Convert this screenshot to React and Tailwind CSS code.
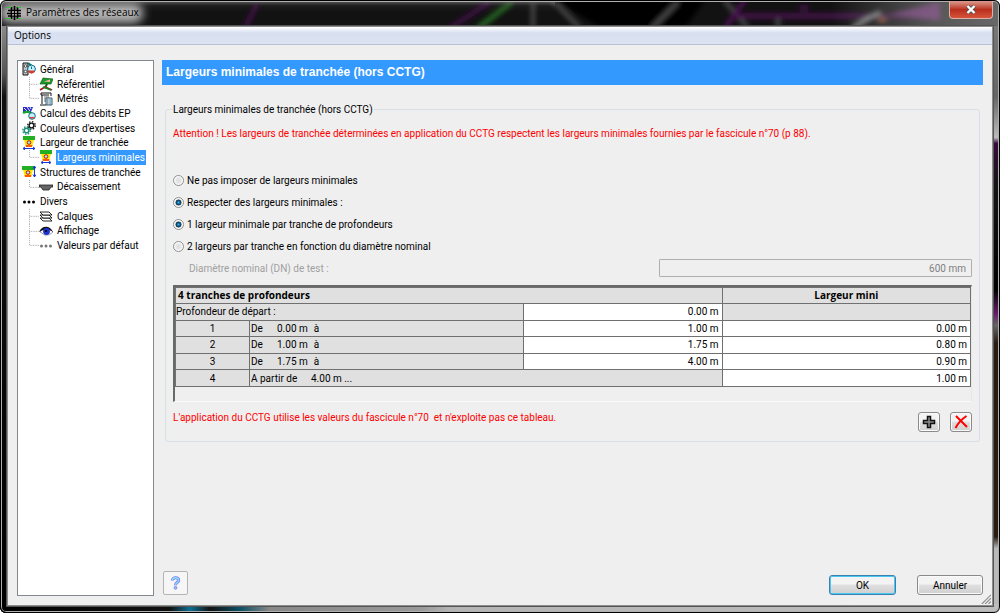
import React, { useState } from "react";

const treeItems = [
  { id: "general", label: "Général", level: 0 },
  { id: "referentiel", label: "Référentiel", level: 1 },
  { id: "metres", label: "Métrés", level: 1, last: true },
  { id: "debits", label: "Calcul des débits EP", level: 0 },
  { id: "couleurs", label: "Couleurs d'expertises", level: 0 },
  { id: "largeur", label: "Largeur de tranchée", level: 0 },
  { id: "minimales", label: "Largeurs minimales", level: 1, last: true },
  { id: "structures", label: "Structures de tranchée", level: 0 },
  { id: "decaissement", label: "Décaissement", level: 1, last: true },
  { id: "divers", label: "Divers", level: 0 },
  { id: "calques", label: "Calques", level: 1 },
  { id: "affichage", label: "Affichage", level: 1 },
  { id: "defaut", label: "Valeurs par défaut", level: 1, last: true },
];

const tranches = [
  { from: "0.00 m", to: "1.00 m", width: "0.00 m" },
  { from: "1.00 m", to: "1.75 m", width: "0.80 m" },
  { from: "1.75 m", to: "4.00 m", width: "0.90 m" },
];

function TrenchShape() {
  return (
    <>
      <path d="M1 0h12v4H1z" fill="#22b022" />
      <path d="M2 4h10l-2 7H4z" fill="#ffe600" />
      <path d="M3.500 9h7l-.5 2H4z" fill="#ff5a00" />
      <circle cx="7" cy="6.500" r="1.800" fill="#9be8ff" stroke="#c01010" strokeWidth="1" />
    </>
  );
}

function TreeIcon({ id }) {
  const shapes = {
    general: (
      <>
        <path d="M1 1h5v12H1z" fill="#c8c8c8" stroke="#111" />
        <circle cx="3.500" cy="4" r="1.300" fill="#fff" stroke="#333" strokeWidth=".8" />
        <circle cx="3.500" cy="9.500" r="1.300" fill="#fff" stroke="#333" strokeWidth=".8" />
        <path d="M6 1l4 3" stroke="#087a6a" strokeWidth="2" />
        <circle cx="9.500" cy="7" r="3.900" fill="#bff4ff" stroke="#16698a" />
        <path d="M6.500 8.500a3 3 0 0 0 6 0z" fill="#e23a2a" />
        <path d="M9.500 7V4.500" stroke="#16698a" />
      </>
    ),
    referentiel: (
      <>
        <path d="M4 1l10 1-2 5H1z" fill="#1b9a2c" stroke="#0b5c18" strokeWidth=".7" />
        <path d="M5 4.500l6-2v2.500z" fill="#ffb4a4" />
        <path d="M8 7l-2 4" stroke="#0b5c18" strokeWidth="2" />
        <path d="M1 13l5-3 7 3" stroke="#b01818" strokeWidth="1.600" fill="none" />
        <path d="M4 10l8 3" stroke="#0c8a2a" strokeWidth="1.500" />
      </>
    ),
    metres: (
      <>
        <path d="M2 1h10v3M3 3v9M2 1v2h8M1 13h6" fill="none" stroke="#111" />
        <path d="M5 5h5M5 7h3M5 9h2" stroke="#444" strokeWidth=".8" />
        <path d="M7 6h6v7H7z" fill="#dceaf0" stroke="#35566b" />
        <path d="M8 8h4M8 10h4M8 12h4" stroke="#27637f" strokeDasharray="1 .6" />
      </>
    ),
    debits: (
      <>
        <path d="M1 1h10l-2 5H1z" fill="#2b2bcc" />
        <path d="M2 2l3 3M5 1l3 4M8 1l1 2" stroke="#fff" strokeWidth=".9" />
        <path d="M1 7c4-2 8-1 11 3" stroke="#15a32c" strokeWidth="2.200" fill="none" />
        <circle cx="10" cy="10" r="3.300" fill="#bff4ff" stroke="#16698a" />
        <path d="M7.300 11a3 3 0 0 0 5.400 0z" fill="#e23a2a" />
      </>
    ),
    couleurs: (
      <>
        <circle cx="9.500" cy="4.500" r="2.400" fill="none" stroke="#111" strokeWidth="1.400" />
        <circle cx="9.500" cy="4.500" r="3.800" fill="none" stroke="#111" strokeWidth="1.300" strokeDasharray="1.500 1.485" />
        <circle cx="4.500" cy="9.500" r="2.300" fill="none" stroke="#1a8f7a" strokeWidth="1.500" />
        <circle cx="4.500" cy="9.500" r="3.700" fill="none" stroke="#1a8f7a" strokeWidth="1.400" strokeDasharray="1.500 1.400" />
      </>
    ),
    largeur: (
      <>
        <TrenchShape />
        <path d="M1 12.500h12M3 11l-2 1.500L3 14M11 11l2 1.500-2 1.500" stroke="#1636d8" fill="none" />
      </>
    ),
    minimales: (
      <>
        <TrenchShape />
        <path d="M3 12.500h8M4 11l-2 1.500L4 14M10 11l2 1.500-2 1.500" stroke="#1636d8" fill="none" />
      </>
    ),
    structures: (
      <>
        <g transform="translate(-1 1)">
          <TrenchShape />
        </g>
        <path d="M12.500 1v11M11 3.500L12.500 1 14 3.500M11 9.500l1.500 2.500L14 9.500" stroke="#1636d8" fill="none" />
      </>
    ),
    decaissement: (
      <path d="M0 5h14v2h-2l-2 3H4L2 7H0z" fill="#666" stroke="#222" strokeWidth=".8" />
    ),
    divers: (
      <g fill="#000">
        <circle cx="2.500" cy="7" r="1.500" />
        <circle cx="7" cy="7" r="1.500" />
        <circle cx="11.500" cy="7" r="1.500" />
      </g>
    ),
    calques: (
      <g fill="#fff" stroke="#111" strokeWidth=".9">
        <path d="M1 9h9l3 3H4z" />
        <path d="M1 6h9l3 3H4z" />
        <path d="M1 3h9l3 3H4z" />
      </g>
    ),
    affichage: (
      <>
        <path d="M1 8c3-5 9-5 13 0-4 4-9 4-11 1z" fill="#fff" stroke="#777" strokeWidth=".7" />
        <path d="M0 8C3 1 11 1 14 8c-4-3-9-3-14 0z" fill="#111" />
        <circle cx="7.500" cy="7.500" r="3.400" fill="#1c2fd0" />
        <circle cx="7" cy="7" r="1.100" fill="#000" />
      </>
    ),
    defaut: (
      <g fill="#777">
        <circle cx="2.500" cy="7" r="1.500" />
        <circle cx="7" cy="7" r="1.500" />
        <circle cx="11.500" cy="7" r="1.500" />
      </g>
    ),
  };
  return (
    <svg viewBox="0 0 14 14" className="h-[14px] w-[14px] shrink-0" aria-hidden="true">
      {shapes[id]}
    </svg>
  );
}

// dotted connector to the left of a child node
function Branch({ last }) {
  return (
    <svg viewBox="0 0 12 15" preserveAspectRatio="none" className="ml-[7px] h-full w-[10px] shrink-0" aria-hidden="true">
      <path
        d={last ? "M.5 0v7.500h11.500" : "M.5 0v15M.5 7.500h11.500"}
        fill="none"
        stroke="#9a9a9a"
        strokeDasharray="1 1"
      />
    </svg>
  );
}

function GlassBackground() {
  return (
    <svg
      viewBox="0 0 1000 613"
      preserveAspectRatio="none"
      className="absolute inset-0 h-full w-full"
      aria-hidden="true"
    >
      <defs>
        <filter id="soft" x="-20%" y="-50%" width="140%" height="200%">
          <feGaussianBlur stdDeviation="2.5" />
        </filter>
        <filter id="glow" x="-20%" y="-100%" width="140%" height="300%">
          <feGaussianBlur stdDeviation="5" />
        </filter>
        <linearGradient id="left" x1="0" y1="0" x2="0" y2="1">
          <stop offset="0" stopColor="#8a8a8a" />
          <stop offset=".08" stopColor="#555" />
          <stop offset=".12" stopColor="#111" />
          <stop offset="1" stopColor="#000" />
        </linearGradient>
        <linearGradient id="right" x1="0" y1="0" x2="0" y2="1">
          <stop offset="0" stopColor="#777" />
          <stop offset=".12" stopColor="#666" />
          <stop offset=".19" stopColor="#bbb" />
          <stop offset=".2" stopColor="#3a0a40" />
          <stop offset=".27" stopColor="#151515" />
          <stop offset=".45" stopColor="#000" />
          <stop offset=".49" stopColor="#6a1a70" />
          <stop offset=".51" stopColor="#666" />
          <stop offset=".54" stopColor="#2a1c10" />
          <stop offset=".87" stopColor="#2a1c10" />
          <stop offset=".89" stopColor="#b8b8b8" />
          <stop offset="1" stopColor="#b8b8b8" />
        </linearGradient>
        <linearGradient id="bottom">
          <stop offset="0" stopColor="#000" />
          <stop offset=".17" stopColor="#111" />
          <stop offset=".19" stopColor="#0b6f93" />
          <stop offset=".21" stopColor="#111" />
          <stop offset=".24" stopColor="#0b4f63" />
          <stop offset=".27" stopColor="#888" />
          <stop offset=".42" stopColor="#999" />
          <stop offset=".45" stopColor="#b4b4b4" />
          <stop offset="1" stopColor="#bdbdbd" />
        </linearGradient>
        <linearGradient id="sheen" x1="0" y1="0" x2="0" y2="1">
          <stop offset="0" stopColor="#999" stopOpacity=".7" />
          <stop offset=".5" stopColor="#777" stopOpacity=".1" />
          <stop offset="1" stopColor="#777" stopOpacity="0" />
        </linearGradient>
        <linearGradient id="haze">
          <stop offset="0" stopColor="#777" stopOpacity="0" />
          <stop offset=".6" stopColor="#777" stopOpacity=".8" />
          <stop offset="1" stopColor="#777" />
        </linearGradient>
      </defs>
      <rect width="1000" height="613" fill="#121212" />
      <g filter="url(#soft)">
        <path d="M555 0h150l-20 28H600z" fill="#000" />
        <path d="M257 4l-12 24M490 2l-40 26" stroke="#3d1143" strokeWidth="5" />
        <path d="M512 2l-34 26" stroke="#256b22" strokeWidth="5" />
        <path d="M533 2v26M552 0l28 28M678 2l-26 26" stroke="#4c4c4c" strokeWidth="4" />
        <path d="M724 0l24 28M778 14v14" stroke="#4c4c4c" strokeWidth="4" />
        <path d="M735 16h205M745 0l-20 28M800 8h8" stroke="#47104d" strokeWidth="5" />
        <path d="M880 12l-28 16" stroke="#999" strokeWidth="4" />
        <ellipse cx="882" cy="20" rx="5" ry="3" fill="#8a4c2d" />
      </g>
      <rect x="830" width="170" height="28" fill="url(#haze)" opacity=".85" />
      <path d="M890 14l50-12v18z" fill="#8d5c92" opacity=".7" filter="url(#soft)" />
      <rect width="555" height="12" fill="url(#sheen)" />
      <rect x="0" y="3" width="143" height="20" rx="9" fill="#b4b4b4" filter="url(#glow)" />
      <rect y="26" width="9" height="587" fill="url(#left)" />
      <rect x="991" y="26" width="9" height="587" fill="url(#right)" />
      <rect y="604" width="1000" height="9" fill="url(#bottom)" />
    </svg>
  );
}

function Radio({ name, label, checked, onChange }) {
  return (
    <label className="flex items-center gap-[3px]">
      <input
        type="radio"
        name={name}
        checked={checked}
        onChange={onChange}
        className="h-[11px] w-[11px] appearance-none rounded-full border border-[#8e8f8f] bg-[#f4f4f4] bg-[radial-gradient(circle,#dcdcdc,#f8f8f8)] shadow-[inset_0_0_0_1px_#fff] checked:bg-[radial-gradient(circle,#3fb4e8_0,#0b4a73_30%,#163a55_42%,#e6e6e6_52%)]"
      />
      {label}
    </label>
  );
}

export default function App() {
  const [selected, setSelected] = useState("minimales");
  const [mode, setMode] = useState("respecter");
  const [count, setCount] = useState("une");

  const cell = "border border-[#707070] p-0";
  const field = "block h-full w-full bg-transparent pr-[3px] text-right outline-none";
  const button =
    "rounded-[3px] border border-[#8a8a8a] bg-linear-to-b from-[#f3f3f3] from-45% via-[#e0e0e0] via-50% to-[#cfcfcf] shadow-[inset_0_0_0_1px_#fafafa]";

  return (
    <div className="relative flex h-screen flex-col overflow-hidden rounded-[6px] font-[Roboto,sans-serif] text-[10px] leading-[15px] text-black">
      <GlassBackground />
      <div className="relative flex min-h-0 flex-1 flex-col rounded-[6px] border border-black px-[6px] pb-[6px] shadow-[inset_0_0_0_1px_#b0b0b0]">
        <header className="flex h-[25px] shrink-0 items-start justify-between">
          <div className="flex items-center gap-[5px] pt-[4px] font-['Open_Sans',sans-serif]">
            <svg viewBox="0 0 14 14" className="h-[14px] w-[14px]" aria-hidden="true">
              <path d="M4.500 1v12M7.500 0v14M10.500 1v12M1 4.500h13M0 7.500h14M1 10h13" stroke="#000" strokeWidth="1.700" />
              <path d="M5.300 5.300h1.400v1.400H5.300zM8.300 5.300h1.400v1.400H8.300zM5.300 8.200h1.400v1.200H5.300zM8.300 8.200h1.400v1.200H8.300z" fill="#ddd" />
              <path d="M0 1.500h4M10.500 1.500H14M0 12.500h4M10.500 12.500H14" stroke="#1fd01f" />
            </svg>
            <h1>Paramètres des réseaux</h1>
          </div>
          <button
            type="button"
            aria-label="Fermer"
            className="flex h-[18px] w-[44px] items-center justify-center rounded-b-[4px] border border-t-0 border-[#e0b0a8] bg-linear-to-b from-[#d89a90] from-0% via-[#b92e1c] via-50% to-[#d5533a]"
          >
            <svg viewBox="0 0 12 9" className="h-[9px] w-[12px]" aria-hidden="true">
              <path d="M2.500 1l7 7M9.500 1l-7 7" stroke="#555" strokeWidth="4" />
              <path d="M2.500 1l7 7M9.500 1l-7 7" stroke="#fff" strokeWidth="2.400" />
            </svg>
          </button>
        </header>

        <div className="flex min-h-0 flex-1 flex-col border border-[#8c8c8c] bg-[#efefef] outline-1 outline-[#555]">
          <nav className="flex h-[18px] shrink-0 items-center border-b border-[#b9c1d3] bg-linear-to-b from-white from-0% via-[#d8dff0] via-35% to-[#dce3f3] px-[6px] font-['Open_Sans',sans-serif]">
            <button type="button">Options</button>
          </nav>

          <div className="flex min-h-0 flex-1 gap-[8px] pt-[15px] pr-[9px] pb-[9px] pl-[9px]">
            <aside className="w-[137px] shrink-0 border border-[#828790] bg-white pt-[1px]">
              <ul className="grid h-[191px] auto-rows-fr pl-[4px]">
                {treeItems.map((item) => (
                  <li key={item.id} className="flex min-h-0 items-center">
                    {item.level === 1 && <Branch last={item.last} />}
                    <TreeIcon id={item.id} />
                    <button
                      type="button"
                      onClick={() => setSelected(item.id)}
                      className={
                        selected === item.id
                          ? "ml-[3px] bg-[#3399ff] px-[1px] whitespace-nowrap text-white"
                          : "ml-[3px] px-[1px] whitespace-nowrap"
                      }
                    >
                      {item.label}
                    </button>
                  </li>
                ))}
              </ul>
            </aside>

            <main className="flex min-w-0 flex-1 flex-col">
              <h2 className="bg-[#3399ff] px-[4px] py-[5px] font-['Liberation_Sans',sans-serif] text-[12px] font-bold text-white">
                Largeurs minimales de tranchée (hors CCTG)
              </h2>

              <fieldset className="mx-[3px] mt-[17px] min-w-0 rounded-[3px] border border-[#d5dfe5] pr-[7px] pb-[9px] pl-[7px]">
                <legend className="pr-[1px]">Largeurs minimales de tranchée (hors CCTG)</legend>
                <p className="mt-[9px] text-[#ff0000]">
                  Attention ! Les largeurs de tranchée déterminées en application du CCTG
                  respectent les largeurs minimales fournies par le fascicule n°70 (p 88).
                </p>

                <div className="mt-[32px] flex flex-col gap-[7px]">
                  <Radio
                    name="mode"
                    label="Ne pas imposer de largeurs minimales"
                    checked={mode === "aucune"}
                    onChange={() => setMode("aucune")}
                  />
                  <Radio
                    name="mode"
                    label="Respecter des largeurs minimales :"
                    checked={mode === "respecter"}
                    onChange={() => setMode("respecter")}
                  />
                  <Radio
                    name="count"
                    label="1 largeur minimale par tranche de profondeurs"
                    checked={count === "une"}
                    onChange={() => setCount("une")}
                  />
                  <Radio
                    name="count"
                    label="2 largeurs par tranche en fonction du diamètre nominal"
                    checked={count === "deux"}
                    onChange={() => setCount("deux")}
                  />
                </div>

                <div className="mt-[5px] flex items-center justify-between pl-[16px] text-[#a0a0a0]">
                  <label htmlFor="dn">Diamètre nominal (DN) de test :</label>
                  <input
                    id="dn"
                    disabled
                    defaultValue="600 mm"
                    className="h-[18px] w-[40%] rounded-[1px] border border-[#afafaf] px-[5px] text-right text-[#808080]"
                  />
                </div>

                <div className="mt-[8px] h-[117px] border-t-2 border-r border-b border-l-2 border-t-[#696969] border-r-[#e6e6e6] border-b-[#fafafa] border-l-[#696969]">
                  <table className="h-[100px] w-full table-fixed border-collapse bg-[#e0e0e0]">
                    <colgroup>
                      <col className="w-[74px]" />
                      <col />
                      <col className="w-1/4" />
                      <col className="w-5/16" />
                    </colgroup>
                    <thead className="font-['Open_Sans',sans-serif]">
                      <tr>
                        <th colSpan="3" className={`${cell} pl-[2px] text-left`}>
                          4 tranches de profondeurs
                        </th>
                        <th className={cell}>Largeur mini</th>
                      </tr>
                    </thead>
                    <tbody>
                      <tr>
                        <td colSpan="2" className={cell}>Profondeur de départ :</td>
                        <td className={`${cell} bg-white`}>
                          <input aria-label="Profondeur de départ" defaultValue="0.00 m" className={field} />
                        </td>
                        <td className={cell}></td>
                      </tr>
                      {tranches.map((t, i) => (
                        <tr key={i}>
                          <td className={`${cell} text-center`}>{i + 1}</td>
                          <td className={cell}>
                            <span className="inline-block w-[27px] pl-[1px]">De</span>
                            {t.from}
                            <span className="ml-[6px]">à</span>
                          </td>
                          <td className={`${cell} bg-white`}>
                            <input aria-label={`Profondeur ${i + 1}`} defaultValue={t.to} className={field} />
                          </td>
                          <td className={`${cell} bg-white`}>
                            <input aria-label={`Largeur ${i + 1}`} defaultValue={t.width} className={field} />
                          </td>
                        </tr>
                      ))}
                      <tr>
                        <td className={`${cell} text-center`}>4</td>
                        <td colSpan="2" className={cell}>
                          <span className="inline-block w-[61px] pl-[1px]">A partir de</span>
                          4.00 m ...
                        </td>
                        <td className={`${cell} bg-white`}>
                          <input aria-label="Largeur 4" defaultValue="1.00 m" className={field} />
                        </td>
                      </tr>
                    </tbody>
                  </table>
                </div>

                <div className="mt-[8px] flex items-start justify-between">
                  <p className="whitespace-pre text-[#ff0000]">
                    {"L'application du CCTG utilise les valeurs du fascicule n°70  et n'exploite pas ce tableau."}
                  </p>
                  <div className="flex gap-[10px] pt-[2px]">
                    <button type="button" aria-label="Ajouter" className={`${button} flex h-[20px] w-[22px] items-center justify-center`}>
                      <svg viewBox="0 0 14 14" className="h-[14px] w-[14px]" aria-hidden="true">
                        <path
                          d="M5.500 1.500h3v4h4v3h-4v4h-3v-4h-4v-3h4z"
                          fill="#8a8a8a"
                          stroke="#111"
                          strokeWidth="1.500"
                        />
                      </svg>
                    </button>
                    <button type="button" aria-label="Supprimer" className={`${button} flex h-[20px] w-[22px] items-center justify-center`}>
                      <svg viewBox="0 0 14 14" className="h-[14px] w-[14px]" aria-hidden="true">
                        <path d="M2 1c4 4 7 7 11 11M12.500 1C8 4 4 8 1.500 13" stroke="#ff0000" strokeWidth="2" fill="none" />
                      </svg>
                    </button>
                  </div>
                </div>
              </fieldset>

              <footer className="mt-auto flex items-center justify-between pb-[1px] pl-[1px]">
                <button
                  type="button"
                  aria-label="Aide"
                  className="flex h-[24px] w-[25px] items-center justify-center rounded-[2px] border border-[#b4b4b4] bg-[#f6f6f6]"
                >
                  <svg viewBox="0 0 12 16" className="h-[14px] w-[11px]" aria-hidden="true">
                    <path d="M2.500 5c0-4 7-4 7 0 0 2.500-3.500 2-3.500 5.500" stroke="#8878e8" strokeWidth="3.600" fill="none" />
                    <path d="M2.500 5c0-4 7-4 7 0 0 2.500-3.500 2-3.500 5.500" stroke="#7fe0ff" strokeWidth="1.600" fill="none" />
                    <circle cx="6" cy="13.500" r="1.600" fill="#7fd0ff" stroke="#8878e8" strokeWidth="1" />
                  </svg>
                </button>
                <div className="flex gap-[21px] pt-[4px]">
                  <button
                    type="button"
                    className="h-[20px] w-[67px] rounded-[3px] border border-[#3c7fb1] bg-linear-to-b from-[#f3f3f3] from-45% via-[#e0e0e0] via-50% to-[#cfcfcf] shadow-[inset_0_0_0_1px_#48c8f0]"
                  >
                    OK
                  </button>
                  <button type="button" className={`${button} h-[20px] w-[66px]`}>
                    Annuler
                  </button>
                </div>
              </footer>
            </main>
          </div>
        </div>

        {/* resize grip */}
        <svg viewBox="0 0 12 12" className="absolute right-[8px] bottom-[8px] h-[10px] w-[10px]" aria-hidden="true">
          <path d="M1 12L12 1M5 12l7-7M9 12l3-3" stroke="#8a8a8a" strokeWidth="1.300" />
        </svg>
      </div>
    </div>
  );
}
